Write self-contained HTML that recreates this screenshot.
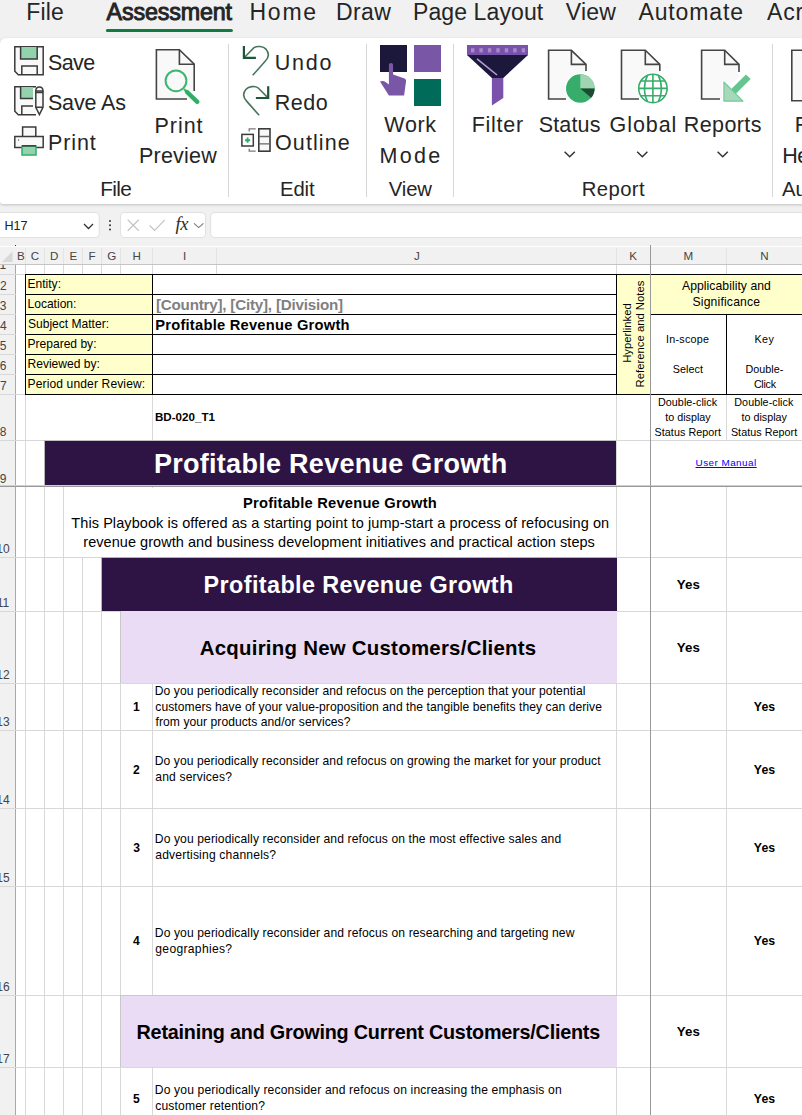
<!DOCTYPE html>
<html><head><meta charset="utf-8"><title>Assessment</title>
<style>
*{box-sizing:border-box;margin:0;padding:0}
html,body{width:802px;height:1115px;overflow:hidden;background:#fff}
body{position:relative;font-family:"Liberation Sans",sans-serif;color:#000}
.a{position:absolute}
.t{position:absolute;white-space:nowrap;line-height:1}
.ui{color:#262626}
.c{text-align:center}
.b{font-weight:bold}
#top{left:0;top:0;width:802px;height:247px;background:#f1f1f1}
#ribbon{left:0;top:38px;width:820px;height:166px;background:#fff;border-radius:6px 0 0 3px;box-shadow:0 1px 3px rgba(0,0,0,.2)}
.sep{position:absolute;width:1px;top:44px;height:153px;background:#dcdcdc}
.vl{position:absolute;width:1px;background:#d8d8d8}
.hl{position:absolute;height:1px;background:#d8d8d8}
.bk{position:absolute;background:#000}
.rh{position:absolute;left:0;width:15px;font-size:13px;color:#444;line-height:1;white-space:nowrap}
.ch{position:absolute;top:249px;font-size:13px;color:#444;line-height:1;text-align:center}
.q{position:absolute;left:155px;font-size:12.25px;line-height:16px;white-space:nowrap;color:#000}
.n{position:absolute;left:120px;width:32px;text-align:center;font-size:12.25px;font-weight:bold;line-height:1}
.y{position:absolute;width:76px;text-align:center;font-size:12.25px;font-weight:bold;line-height:1}
</style></head><body>
<div class="a" id="top"></div>
<div class="a" id="ribbon"></div>

<!--RIBBON-S-->
<svg class="a" style="left:0;top:0" width="802" height="246" viewBox="0 0 802 246" fill="none">
<!-- tab underline -->
<rect x="105.9" y="29" width="127" height="3.1" rx="1.5" fill="#107c41"/>
<!-- group separators -->
<g stroke="#d6d6d6" stroke-width="1"><path d="M228.5 44V197M366.5 44V197M453.5 44V197M772.5 44V197"/></g>
<!-- Save icon -->
<g stroke="#3b3b3b" stroke-width="1.5" stroke-linejoin="miter">
<path d="M14.8 46.7H43.2V74.7H18.3L14.8 71.2Z" fill="#f9f9f9"/>
<path d="M20.6 47V59H37.2V47" fill="#92d2ad"/>
<path d="M21.8 74.5V66H37.2V74.5"/>
</g>
<!-- Save As icon -->
<g stroke="#3b3b3b" stroke-width="1.5">
<path d="M36 86.7H14.8V111.2L18.3 114.7H36" fill="#f9f9f9"/>
<path d="M20.6 87H33V98H20.6Z" fill="#92d2ad" stroke="none"/><path d="M20.6 87V98.5H33"/>
<path d="M21.8 114.5V106H33"/>
<path d="M35.8 91V107.3L39.4 114.6L43 107.3V91" fill="#f9f9f9"/><path d="M35.8 91C35.8 85.6 43 85.6 43 91Z" fill="#f9f9f9"/><path d="M35.8 92.6H43M35.8 107.3H43"/>
</g>
<!-- Print icon -->
<g stroke="#3b3b3b" stroke-width="1.5">
<path d="M22.6 136.4V127H35.8V136.4" fill="#f9f9f9"/>
<path d="M14.8 136.5H43.2V147.6H14.8Z" fill="#f9f9f9"/>
<rect x="22" y="146" width="14" height="9" fill="#92d2ad" stroke="#2fae68"/>
<path d="M22 145.8H36"/>
<circle cx="18.6" cy="140" r="0.45" fill="#555" stroke="#555" stroke-width=".5"/>
</g>
<!-- Print preview icon -->
<g>
<path d="M156.4 49.8H179.4L194.2 64.2V91 L190 99H156.4Z" fill="#f9f9f9"/>
<path d="M194.2 91V64.2L179.4 49.8H156.4V99H187" stroke="#444" stroke-width="1.6"/>
<path d="M179.4 49.8V64.2H194.2" stroke="#444" stroke-width="1.6"/>
<circle cx="176" cy="80.8" r="10.4" stroke="#3db670" stroke-width="2" fill="#f9f9f9" fill-opacity=".6"/>
<path d="M184 89L186.8 92" stroke="#3db670" stroke-width="2"/>
<path d="M187 92L197.3 101.8" stroke="#2fae68" stroke-width="4.4" stroke-linecap="round"/>
</g>
<!-- Undo -->
<g stroke="#1f5537" fill="none">
<path d="M243.9 46.1V57.9H255.9" stroke-width="2.2"/>
<path d="M244.8 57L254 47.7C257 45.7 263.2 46 266.2 49.4C269.3 53.2 268.6 57.6 265.4 61L252.7 75.3" stroke-width="1.6" stroke-opacity=".82"/>
</g>
<!-- Redo -->
<g stroke="#1f5537" fill="none">
<path d="M268.2 86.2V98H255.9" stroke-width="2.2"/>
<path d="M267.3 97.1L258 87.8C255 85.8 248.8 86.1 245.8 89.5C242.7 93.3 243.4 97.7 246.6 101.1L259.1 115.3" stroke-width="1.6" stroke-opacity=".82"/>
</g>
<!-- Outline -->
<g>
<path d="M255.7 128.9H249.2V131.4M249.2 148.8V151.1H255.7" stroke="#7a7a7a" stroke-width="1.3"/>
<rect x="241.9" y="134.4" width="11.4" height="11.6" fill="#fff" stroke="#3b3b3b" stroke-width="1.5"/>
<path d="M247.6 137.6V142.8M245 140.2H250.2" stroke="#2fae68" stroke-width="1.9"/>
<rect x="258.8" y="128.8" width="11.2" height="22.4" fill="#f8f8f8" stroke="#3b3b3b" stroke-width="1.6"/>
<path d="M259 136.5H270M259 143.8H270" stroke="#666" stroke-width="1.3"/>
</g>
<!-- Work Mode -->
<rect x="380" y="45" width="27" height="27" fill="#1c183c"/>
<rect x="414" y="45" width="27" height="27" fill="#7a57a6"/>
<rect x="414" y="79" width="27" height="27" fill="#006b59"/>
<path d="M388.9 65.2C388.9 62.4 393.1 62.4 393.1 65.2V74.6L404.5 78.4C405.8 79 406.2 80 406 81.5L404.1 95.6H388.9L380 81.6C382 80.6 384 80.8 385.5 82L388.9 84.6Z" fill="#7a57a6"/>
<!-- Filter -->
<rect x="467" y="45" width="61" height="10.2" fill="#7a52ab"/>
<g fill="#a48bc9"><rect x="471.0" y="48.2" width="3.4" height="4.2"/><rect x="479.4" y="48.2" width="3.4" height="4.2"/><rect x="487.9" y="48.2" width="3.4" height="4.2"/><rect x="496.3" y="48.2" width="3.4" height="4.2"/><rect x="504.8" y="48.2" width="3.4" height="4.2"/><rect x="513.2" y="48.2" width="3.4" height="4.2"/><rect x="521.7" y="48.2" width="3.4" height="4.2"/></g>
<path d="M467 55H528L503.3 78H491.9Z" fill="#1c183c"/>
<path d="M477 58.8L497 75" stroke="#b4a0d2" stroke-width="1.6"/>
<path d="M491.9 78H503.3V98L491.9 105.5Z" fill="#7a52ab"/>
<!-- Status doc -->
<g>
<path d="M548.6 50.3H571.4L586 64.4V99H548.6Z" fill="#f9f9f9"/>
<path d="M586 71V64.4L571.4 50.3H548.6V99H566" stroke="#444" stroke-width="1.6"/>
<path d="M571.4 50.3V64.4H586" stroke="#444" stroke-width="1.6"/>
<circle cx="580.3" cy="88.5" r="15.6" fill="#fff"/>
<circle cx="580.3" cy="88.5" r="14.3" fill="#36ad6a"/>
<path d="M580.3 88.5V74.2A14.3 14.3 0 0 1 594.6 88.5Z" fill="#9fd5b3"/>
<path d="M580.3 88.5H594.6A14.3 14.3 0 0 1 591.2 97.8Z" fill="#1d4a30"/>
</g>
<!-- Global doc -->
<g>
<path d="M621.5 50.3H645.3L659.8 64.4V99H621.5Z" fill="#f9f9f9"/>
<path d="M659.8 71V64.4L645.3 50.3H621.5V99H639" stroke="#444" stroke-width="1.6"/>
<path d="M645.3 50.3V64.4H659.8" stroke="#444" stroke-width="1.6"/>
<circle cx="652.9" cy="88.4" r="15.8" fill="#fff"/>
<g stroke="#36ad6a" stroke-width="1.6">
<circle cx="652.9" cy="88.4" r="14.2"/>
<path d="M652.9 74.2V102.6M638.7 88.4H667.1M640.8 81H665M640.8 95.8H665"/>
<path d="M647.5 75.3C643.5 83 643.5 94 647.5 101.5M658.3 75.3C662.3 83 662.3 94 658.3 101.5"/>
</g>
</g>
<!-- Reports doc -->
<g>
<path d="M701.6 50.3H724.7L739 64.4V99H701.6Z" fill="#f9f9f9"/>
<path d="M739 72V64.4L724.7 50.3H701.6V99H720" stroke="#444" stroke-width="1.6"/>
<path d="M724.7 50.3V64.4H739" stroke="#444" stroke-width="1.6"/>
<path d="M722 79.5L730 84L745.5 71.5L753 79L740 94.5L746.5 103H722Z" fill="#fff"/>
<path d="M731.3 89.1L746 74.4L750.6 79L735.9 93.7Z" fill="#66c490"/>
<path d="M723.9 82V101.1H743Z" fill="#a6d9ba" stroke="#72c899" stroke-width="1.1" stroke-linejoin="round"/>
</g>
<!-- next group doc (cut) -->
<path d="M791.8 50.3H810V100.8H791.8Z" fill="#f9f9f9" stroke="#444" stroke-width="1.6"/>
<!-- chevrons -->
<g stroke="#333" stroke-width="1.5"><path d="M564.6 151.8L569.7 156.8L574.8 151.8"/><path d="M637.2 151.8L642.3 156.8L647.4 151.8"/><path d="M717.6 151.8L722.7 156.8L727.8 151.8"/></g>
<!-- formula bar -->
<rect x="-3.5" y="212.5" width="102.7" height="25" rx="3.5" fill="#fff" stroke="#e1e1e1"/>
<path d="M84 224L88.5 228.5L93 224" stroke="#333" stroke-width="1.3"/>
<g fill="#333"><circle cx="110" cy="221" r="1"/><circle cx="110" cy="225.2" r="1"/><circle cx="110" cy="229.4" r="1"/></g>
<rect x="120.5" y="212.5" width="85" height="25" rx="3.5" fill="#fff" stroke="#e1e1e1"/>
<path d="M127.7 219.7L138.8 230.7M138.8 219.7L127.7 230.7" stroke="#c4c4c4" stroke-width="1.2"/>
<path d="M149.6 225.5L154.6 230.5L164.8 219.8" stroke="#c4c4c4" stroke-width="1.2"/>
<path d="M194 223.3L198.7 227.6L203.4 223.3" stroke="#7a7a7a" stroke-width="1.1"/>
<rect x="210.7" y="212.5" width="600" height="25" rx="3.5" fill="#fff" stroke="#e1e1e1"/>
</svg>
<div class="t" style="left:175.5px;top:214.5px;font-size:18.5px;font-family:'Liberation Serif',serif;font-style:italic;color:#2b2b2b;letter-spacing:-.3px">fx</div>
<!--RIBBON-E-->
<!--TABS-S-->
<div class="t" style="left:26.20px;top:1px;font-size:23px;letter-spacing:0.200px;color:#252525;">File</div>
<div class="t" style="left:106.60px;top:1px;font-size:23.3px;letter-spacing:-0.172px;color:#252525;-webkit-text-stroke:0.95px #252525;">Assessment</div>
<div class="t" style="left:249.50px;top:1px;font-size:23px;letter-spacing:1.750px;color:#252525;">Home</div>
<div class="t" style="left:336.00px;top:1px;font-size:23px;letter-spacing:0.417px;color:#252525;">Draw</div>
<div class="t" style="left:413.00px;top:1px;font-size:23px;letter-spacing:0.100px;color:#252525;">Page Layout</div>
<div class="t" style="left:565.75px;top:1px;font-size:23px;letter-spacing:0.250px;color:#252525;">View</div>
<div class="t" style="left:638.50px;top:1px;font-size:23px;letter-spacing:0.857px;color:#252525;">Automate</div>
<div class="t" style="left:767.00px;top:1px;font-size:23px;letter-spacing:0.833px;color:#252525;">Acrobat</div>
<div class="t" style="left:47.90px;top:53px;font-size:21.5px;letter-spacing:-0.567px;color:#252525;">Save</div>
<div class="t" style="left:47.90px;top:93px;font-size:21.5px;letter-spacing:-0.133px;color:#252525;">Save As</div>
<div class="t" style="left:47.95px;top:133px;font-size:21.5px;letter-spacing:0.887px;color:#252525;">Print</div>
<div class="t" style="left:154.55px;top:116px;font-size:21.5px;letter-spacing:0.938px;color:#252525;">Print</div>
<div class="t" style="left:138.95px;top:146px;font-size:21.5px;letter-spacing:0.225px;color:#252525;">Preview</div>
<div class="t" style="left:274.75px;top:53px;font-size:21.5px;letter-spacing:1.783px;color:#252525;">Undo</div>
<div class="t" style="left:274.75px;top:93px;font-size:21.5px;letter-spacing:0.517px;color:#252525;">Redo</div>
<div class="t" style="left:275.00px;top:133px;font-size:21.5px;letter-spacing:1.108px;color:#252525;">Outline</div>
<div class="t" style="left:384.35px;top:115px;font-size:21.5px;letter-spacing:0.667px;color:#252525;">Work</div>
<div class="t" style="left:379.45px;top:146px;font-size:21.5px;letter-spacing:2.333px;color:#252525;">Mode</div>
<div class="t" style="left:471.65px;top:115px;font-size:21.5px;letter-spacing:0.750px;color:#252525;">Filter</div>
<div class="t" style="left:538.80px;top:115px;font-size:21.5px;letter-spacing:0.130px;color:#252525;">Status</div>
<div class="t" style="left:609.60px;top:115px;font-size:21.5px;letter-spacing:0.930px;color:#252525;">Global</div>
<div class="t" style="left:683.85px;top:115px;font-size:21.5px;letter-spacing:0.392px;color:#252525;">Reports</div>
<div class="t" style="left:794.75px;top:115px;font-size:21.5px;color:#252525;">Find</div>
<div class="t" style="left:782.15px;top:146px;font-size:21.5px;letter-spacing:-0.500px;color:#252525;">Help</div>
<div class="t" style="left:100.25px;top:179px;font-size:20.8px;letter-spacing:-0.650px;color:#252525;">File</div>
<div class="t" style="left:279.95px;top:179px;font-size:20.3px;letter-spacing:-0.067px;color:#252525;">Edit</div>
<div class="t" style="left:388.65px;top:179px;font-size:20.3px;letter-spacing:-0.083px;color:#252525;">View</div>
<div class="t" style="left:581.75px;top:179px;font-size:20.3px;letter-spacing:0.400px;color:#252525;">Report</div>
<div class="t" style="left:781.90px;top:179px;font-size:20.3px;color:#252525;">Audit</div>
<div class="t" style="left:4.50px;top:220px;font-size:12.6px;color:#222;">H17</div>
<!--TABS-E-->
<!--FBAR-->
<!--SHEET-S-->
<!-- sheet background -->
<div class="a" style="left:0;top:246px;width:802px;height:869px;background:#fff"></div>
<!-- col header band -->
<div class="a" style="left:0;top:247px;width:802px;height:18px;background:#f1f1f1"></div>
<div class="a" style="left:15px;top:245px;width:1px;height:1px;background:#333"></div>
<div class="a" style="left:0;top:264px;width:802px;height:1px;background:#c4c4c4"></div>
<!-- row header band -->
<div class="a" style="left:0;top:265px;width:15px;height:850px;background:#f1f1f1"></div>
<div class="a" style="left:15px;top:265px;width:1px;height:850px;background:#a8a8a8"></div>
<!-- select-all triangle -->
<svg class="a" style="left:0;top:246px" width="16" height="19"><path d="M12.5 5.5V16H2z" fill="#d8d8d8"/></svg>
<!-- column header letters -->
<!-- col header separators -->
<div class="vl" style="left:25px;top:248px;height:16px;background:#e4e4e4"></div>
<div class="vl" style="left:44px;top:248px;height:16px;background:#e4e4e4"></div>
<div class="vl" style="left:63px;top:248px;height:16px;background:#e4e4e4"></div>
<div class="vl" style="left:82px;top:248px;height:16px;background:#e4e4e4"></div>
<div class="vl" style="left:101px;top:248px;height:16px;background:#e4e4e4"></div>
<div class="vl" style="left:120px;top:248px;height:16px;background:#e4e4e4"></div>
<div class="vl" style="left:152px;top:248px;height:16px;background:#e4e4e4"></div>
<div class="vl" style="left:216px;top:248px;height:16px;background:#e4e4e4"></div>
<div class="vl" style="left:616px;top:248px;height:16px;background:#e4e4e4"></div>
<div class="vl" style="left:726px;top:248px;height:16px;background:#e4e4e4"></div>
<!-- GRID vertical lines -->
<div class="vl" style="left:25px;top:265px;height:850px"></div>
<div class="vl" style="left:44px;top:265px;height:850px"></div>
<div class="vl" style="left:63px;top:487px;height:628px"></div>
<div class="vl" style="left:82px;top:557px;height:558px"></div>
<div class="vl" style="left:101px;top:557px;height:558px"></div>
<div class="vl" style="left:120px;top:611px;height:504px"></div>
<div class="vl" style="left:152px;top:265px;height:850px"></div>
<div class="vl" style="left:216px;top:265px;height:10px"></div>
<div class="vl" style="left:63px;top:265px;height:10px"></div>
<div class="vl" style="left:82px;top:265px;height:10px"></div>
<div class="vl" style="left:101px;top:265px;height:10px"></div>
<div class="vl" style="left:120px;top:265px;height:10px"></div>
<div class="vl" style="left:616px;top:265px;height:850px"></div>
<div class="vl" style="left:726px;top:265px;height:850px"></div>
<!-- GRID horizontal lines -->
<div class="hl" style="left:0;top:274px;width:802px"></div>
<div class="hl" style="left:0;top:294px;width:16px"></div>
<div class="hl" style="left:0;top:314px;width:16px"></div>
<div class="hl" style="left:0;top:334px;width:16px"></div>
<div class="hl" style="left:0;top:354px;width:16px"></div>
<div class="hl" style="left:0;top:374px;width:16px"></div>
<div class="hl" style="left:0;top:394px;width:802px"></div>
<div class="hl" style="left:0;top:440px;width:802px"></div>

<div class="hl" style="left:0;top:557px;width:802px"></div>
<div class="hl" style="left:0;top:611px;width:802px"></div>
<div class="hl" style="left:0;top:683px;width:802px"></div>
<div class="hl" style="left:0;top:730px;width:802px"></div>
<div class="hl" style="left:0;top:808px;width:802px"></div>
<div class="hl" style="left:0;top:886px;width:802px"></div>
<div class="hl" style="left:0;top:995px;width:802px"></div>
<div class="hl" style="left:0;top:1067px;width:802px"></div>
<!-- white covers for merged cells -->
<div class="a" style="left:26px;top:395px;width:126px;height:45px;background:#fff"></div>
<div class="a" style="left:64px;top:488px;width:552px;height:69px;background:#fff"></div>
<div class="a" style="left:651px;top:441px;width:151px;height:46px;background:#fff"></div>
<!-- yellow label block -->
<div class="a" style="left:25px;top:274px;width:128px;height:121px;background:#ffffcc"></div>
<div class="a" style="left:616px;top:274px;width:35px;height:121px;background:#ffffcc"></div>
<div class="a" style="left:651px;top:274px;width:151px;height:41px;background:#ffffcc"></div>
<!-- black borders of header table -->
<div class="bk" style="left:25px;top:274px;width:777px;height:1px"></div>
<div class="bk" style="left:25px;top:294px;width:592px;height:1px"></div>
<div class="bk" style="left:25px;top:314px;width:592px;height:1px"></div>
<div class="bk" style="left:25px;top:334px;width:592px;height:1px"></div>
<div class="bk" style="left:25px;top:354px;width:592px;height:1px"></div>
<div class="bk" style="left:25px;top:374px;width:592px;height:1px"></div>
<div class="bk" style="left:25px;top:394px;width:777px;height:1px"></div>
<div class="bk" style="left:651px;top:314px;width:151px;height:1px"></div>
<div class="bk" style="left:25px;top:274px;width:1px;height:121px"></div>
<div class="bk" style="left:152px;top:274px;width:1px;height:121px"></div>
<div class="bk" style="left:616px;top:274px;width:1px;height:121px"></div>
<div class="bk" style="left:726px;top:314px;width:1px;height:81px"></div>
<!-- banners -->
<div class="a" style="left:44px;top:440px;width:572px;height:45px;background:#2e1345;border-left:1px solid #b4b4b4;border-top:1px solid #c0c0c0"></div>
<div class="a" style="left:101px;top:557px;width:516px;height:54px;background:#2e1345;border-left:1px solid #b4b4b4;border-top:1px solid #b4b4b4"></div>
<div class="a" style="left:120px;top:611px;width:497px;height:72px;background:#eadcf4;border-left:1px solid #c8c8c8"></div>
<div class="a" style="left:120px;top:995px;width:497px;height:72px;background:#eadcf4;border-left:1px solid #c8c8c8;border-top:1px solid #c8c8c8"></div>
<!-- freeze lines -->
<div class="a" style="left:0;top:485px;width:802px;height:1px;background:#d0d0d0"></div><div class="a" style="left:0;top:486px;width:802px;height:1px;background:#999"></div>
<div class="a" style="left:650px;top:245px;width:1px;height:870px;background:#999"></div>
<!-- row numbers -->
<!--CELLTEXT-S-->
<div class="t" style="left:27.50px;top:278px;font-size:12.05px;">Entity:</div>
<div class="t" style="left:27.50px;top:298px;font-size:12.05px;">Location:</div>
<div class="t" style="left:28.00px;top:318px;font-size:12.05px;">Subject Matter:</div>
<div class="t" style="left:27.50px;top:338px;font-size:12.05px;">Prepared by:</div>
<div class="t" style="left:27.50px;top:358px;font-size:12.05px;">Reviewed by:</div>
<div class="t" style="left:27.50px;top:378px;font-size:12.05px;letter-spacing:0.132px;">Period under Review:</div>
<div class="t" style="left:155.95px;top:297px;font-size:15.2px;font-weight:bold;letter-spacing:-0.214px;color:#808080;">[Country], [City], [Division]</div>
<div class="t" style="left:155.20px;top:318px;font-size:14.7px;font-weight:bold;letter-spacing:0.244px;">Profitable Revenue Growth</div>
<div class="t" style="left:154.95px;top:411px;font-size:11.6px;font-weight:bold;letter-spacing:0.013px;">BD-020_T1</div>
<div class="t" style="left:153.95px;top:451px;font-size:27px;font-weight:bold;letter-spacing:0.281px;color:#fff;">Profitable Revenue Growth</div>
<div class="t" style="left:243.00px;top:496px;font-size:14.7px;font-weight:bold;letter-spacing:0.219px;">Profitable Revenue Growth</div>
<div class="t" style="left:71.35px;top:516px;font-size:14.5px;letter-spacing:0.073px;">This Playbook is offered as a starting point to jump-start a process of refocusing on</div>
<div class="t" style="left:83.30px;top:535px;font-size:14.5px;letter-spacing:0.049px;">revenue growth and business development initiatives and practical action steps</div>
<div class="t" style="left:203.60px;top:574px;font-size:23.4px;font-weight:bold;letter-spacing:0.394px;color:#fff;">Profitable Revenue Growth</div>
<div class="t" style="left:199.70px;top:638px;font-size:20.4px;font-weight:bold;letter-spacing:0.265px;">Acquiring New Customers/Clients</div>
<div class="t" style="left:136.55px;top:1023px;font-size:19.8px;font-weight:bold;letter-spacing:-0.218px;">Retaining and Growing Current Customers/Clients</div>
<div class="t" style="left:154.80px;top:685px;font-size:12.1px;letter-spacing:0.072px;">Do you periodically reconsider and refocus on the perception that your potential</div>
<div class="t" style="left:155.30px;top:701px;font-size:12.1px;letter-spacing:0.061px;">customers have of your value-proposition and the tangible benefits they can derive</div>
<div class="t" style="left:155.55px;top:716px;font-size:12.1px;letter-spacing:0.057px;">from your products and/or services?</div>
<div class="t" style="left:132.88px;top:701px;font-size:12.1px;font-weight:bold;">1</div>
<div class="t" style="left:753.85px;top:701px;font-size:12.3px;font-weight:bold;letter-spacing:0.050px;">Yes</div>
<div class="t" style="left:154.80px;top:755px;font-size:12.1px;letter-spacing:0.077px;">Do you periodically reconsider and refocus on growing the market for your product</div>
<div class="t" style="left:155.30px;top:771px;font-size:12.1px;letter-spacing:0.162px;">and services?</div>
<div class="t" style="left:133.12px;top:764px;font-size:12.1px;font-weight:bold;">2</div>
<div class="t" style="left:753.85px;top:764px;font-size:12.3px;font-weight:bold;letter-spacing:0.050px;">Yes</div>
<div class="t" style="left:154.80px;top:833px;font-size:12.1px;letter-spacing:0.109px;">Do you periodically reconsider and refocus on the most effective sales and</div>
<div class="t" style="left:155.30px;top:849px;font-size:12.1px;letter-spacing:0.185px;">advertising channels?</div>
<div class="t" style="left:133.25px;top:842px;font-size:12.1px;font-weight:bold;">3</div>
<div class="t" style="left:753.85px;top:842px;font-size:12.3px;font-weight:bold;letter-spacing:0.050px;">Yes</div>
<div class="t" style="left:154.80px;top:927px;font-size:12.1px;letter-spacing:0.111px;">Do you periodically reconsider and refocus on researching and targeting new</div>
<div class="t" style="left:155.30px;top:943px;font-size:12.1px;letter-spacing:0.314px;">geographies?</div>
<div class="t" style="left:133.00px;top:935px;font-size:12.1px;font-weight:bold;">4</div>
<div class="t" style="left:753.85px;top:935px;font-size:12.3px;font-weight:bold;letter-spacing:0.050px;">Yes</div>
<div class="t" style="left:154.80px;top:1084px;font-size:12.1px;letter-spacing:0.154px;">Do you periodically reconsider and refocus on increasing the emphasis on</div>
<div class="t" style="left:155.30px;top:1100px;font-size:12.1px;letter-spacing:0.150px;">customer retention?</div>
<div class="t" style="left:133.00px;top:1093px;font-size:12.1px;font-weight:bold;">5</div>
<div class="t" style="left:753.85px;top:1093px;font-size:12.3px;font-weight:bold;letter-spacing:0.050px;">Yes</div>
<div class="t" style="left:676.75px;top:578px;font-size:13.3px;font-weight:bold;letter-spacing:0.100px;">Yes</div>
<div class="t" style="left:676.75px;top:641px;font-size:13.3px;font-weight:bold;letter-spacing:0.100px;">Yes</div>
<div class="t" style="left:676.75px;top:1025px;font-size:13.3px;font-weight:bold;letter-spacing:0.100px;">Yes</div>
<div class="t" style="left:682.00px;top:280px;font-size:12.2px;letter-spacing:0.047px;">Applicability and</div>
<div class="t" style="left:692.50px;top:296px;font-size:12.2px;letter-spacing:0.168px;">Significance</div>
<div class="t" style="left:666.00px;top:334px;font-size:10.75px;letter-spacing:0.264px;">In-scope</div>
<div class="t" style="left:672.85px;top:364px;font-size:10.75px;letter-spacing:0.050px;">Select</div>
<div class="t" style="left:754.45px;top:334px;font-size:10.75px;letter-spacing:0.500px;">Key</div>
<div class="t" style="left:745.50px;top:364px;font-size:10.75px;letter-spacing:0.025px;">Double-</div>
<div class="t" style="left:753.90px;top:379px;font-size:10.75px;letter-spacing:-0.287px;">Click</div>
<div class="t" style="left:658.00px;top:397px;font-size:10.75px;letter-spacing:0.045px;">Double-click</div>
<div class="t" style="left:665.25px;top:412px;font-size:10.75px;">to display</div>
<div class="t" style="left:654.60px;top:427px;font-size:10.75px;letter-spacing:0.046px;">Status Report</div>
<div class="t" style="left:734.30px;top:397px;font-size:10.75px;letter-spacing:0.045px;">Double-click</div>
<div class="t" style="left:741.55px;top:412px;font-size:10.75px;">to display</div>
<div class="t" style="left:730.90px;top:427px;font-size:10.75px;letter-spacing:0.046px;">Status Report</div>
<div class="t" style="left:695.55px;top:458px;font-size:9.9px;letter-spacing:0.465px;color:#0000ff;text-decoration:underline;">User Manual</div>
<div class="t" style="left:16.88px;top:250px;font-size:11.6px;color:#444;">B</div>
<div class="t" style="left:30.85px;top:250px;font-size:11.6px;color:#444;">C</div>
<div class="t" style="left:50.02px;top:250px;font-size:11.6px;color:#444;">D</div>
<div class="t" style="left:69.38px;top:250px;font-size:11.6px;color:#444;">E</div>
<div class="t" style="left:88.53px;top:250px;font-size:11.6px;color:#444;">F</div>
<div class="t" style="left:107.33px;top:250px;font-size:11.6px;color:#444;">G</div>
<div class="t" style="left:132.45px;top:250px;font-size:11.6px;color:#444;">H</div>
<div class="t" style="left:182.88px;top:250px;font-size:11.6px;color:#444;">I</div>
<div class="t" style="left:413.88px;top:250px;font-size:11.6px;color:#444;">J</div>
<div class="t" style="left:629.25px;top:250px;font-size:11.6px;color:#444;">K</div>
<div class="t" style="left:683.62px;top:250px;font-size:11.6px;color:#444;">M</div>
<div class="t" style="left:760.25px;top:250px;font-size:11.6px;color:#444;">N</div>
<div class="t" style="left:-0.05px;top:280px;font-size:12px;color:#444;">2</div>
<div class="t" style="left:-0.17px;top:300px;font-size:12px;color:#444;">3</div>
<div class="t" style="left:-0.05px;top:320px;font-size:12px;color:#444;">4</div>
<div class="t" style="left:-0.17px;top:340px;font-size:12px;color:#444;">5</div>
<div class="t" style="left:-0.17px;top:360px;font-size:12px;color:#444;">6</div>
<div class="t" style="left:-0.05px;top:380px;font-size:12px;color:#444;">7</div>
<div class="t" style="left:-0.17px;top:426px;font-size:12px;color:#444;">8</div>
<div class="t" style="left:-0.17px;top:473px;font-size:12px;color:#444;">9</div>
<div class="t" style="left:-3.80px;top:543px;font-size:12px;color:#444;">10</div>
<div class="t" style="left:-3.30px;top:597px;font-size:12px;color:#444;">11</div>
<div class="t" style="left:-3.67px;top:669px;font-size:12px;color:#444;">12</div>
<div class="t" style="left:-3.67px;top:716px;font-size:12px;color:#444;">13</div>
<div class="t" style="left:-3.80px;top:794px;font-size:12px;color:#444;">14</div>
<div class="t" style="left:-3.80px;top:872px;font-size:12px;color:#444;">15</div>
<div class="t" style="left:-3.67px;top:981px;font-size:12px;color:#444;">16</div>
<div class="t" style="left:-3.67px;top:1053px;font-size:12px;color:#444;">17</div>
<div class="a" style="left:0;top:265px;width:15px;height:9px;overflow:hidden"><div class="t" style="left:-0.5px;top:-6px;font-size:12px;color:#444">1</div></div>
<div class="t" style="left:627.5px;top:333px;font-size:11.3px;transform:translate(-50%,-50%) rotate(-90deg);transform-origin:center">Hyperlinked</div>
<div class="t" style="left:641.3px;top:333.5px;font-size:11.3px;transform:translate(-50%,-50%) rotate(-90deg);transform-origin:center">Reference and Notes</div>
<!--CELLTEXT-E-->
<!--SHEET-E-->
</body></html>
